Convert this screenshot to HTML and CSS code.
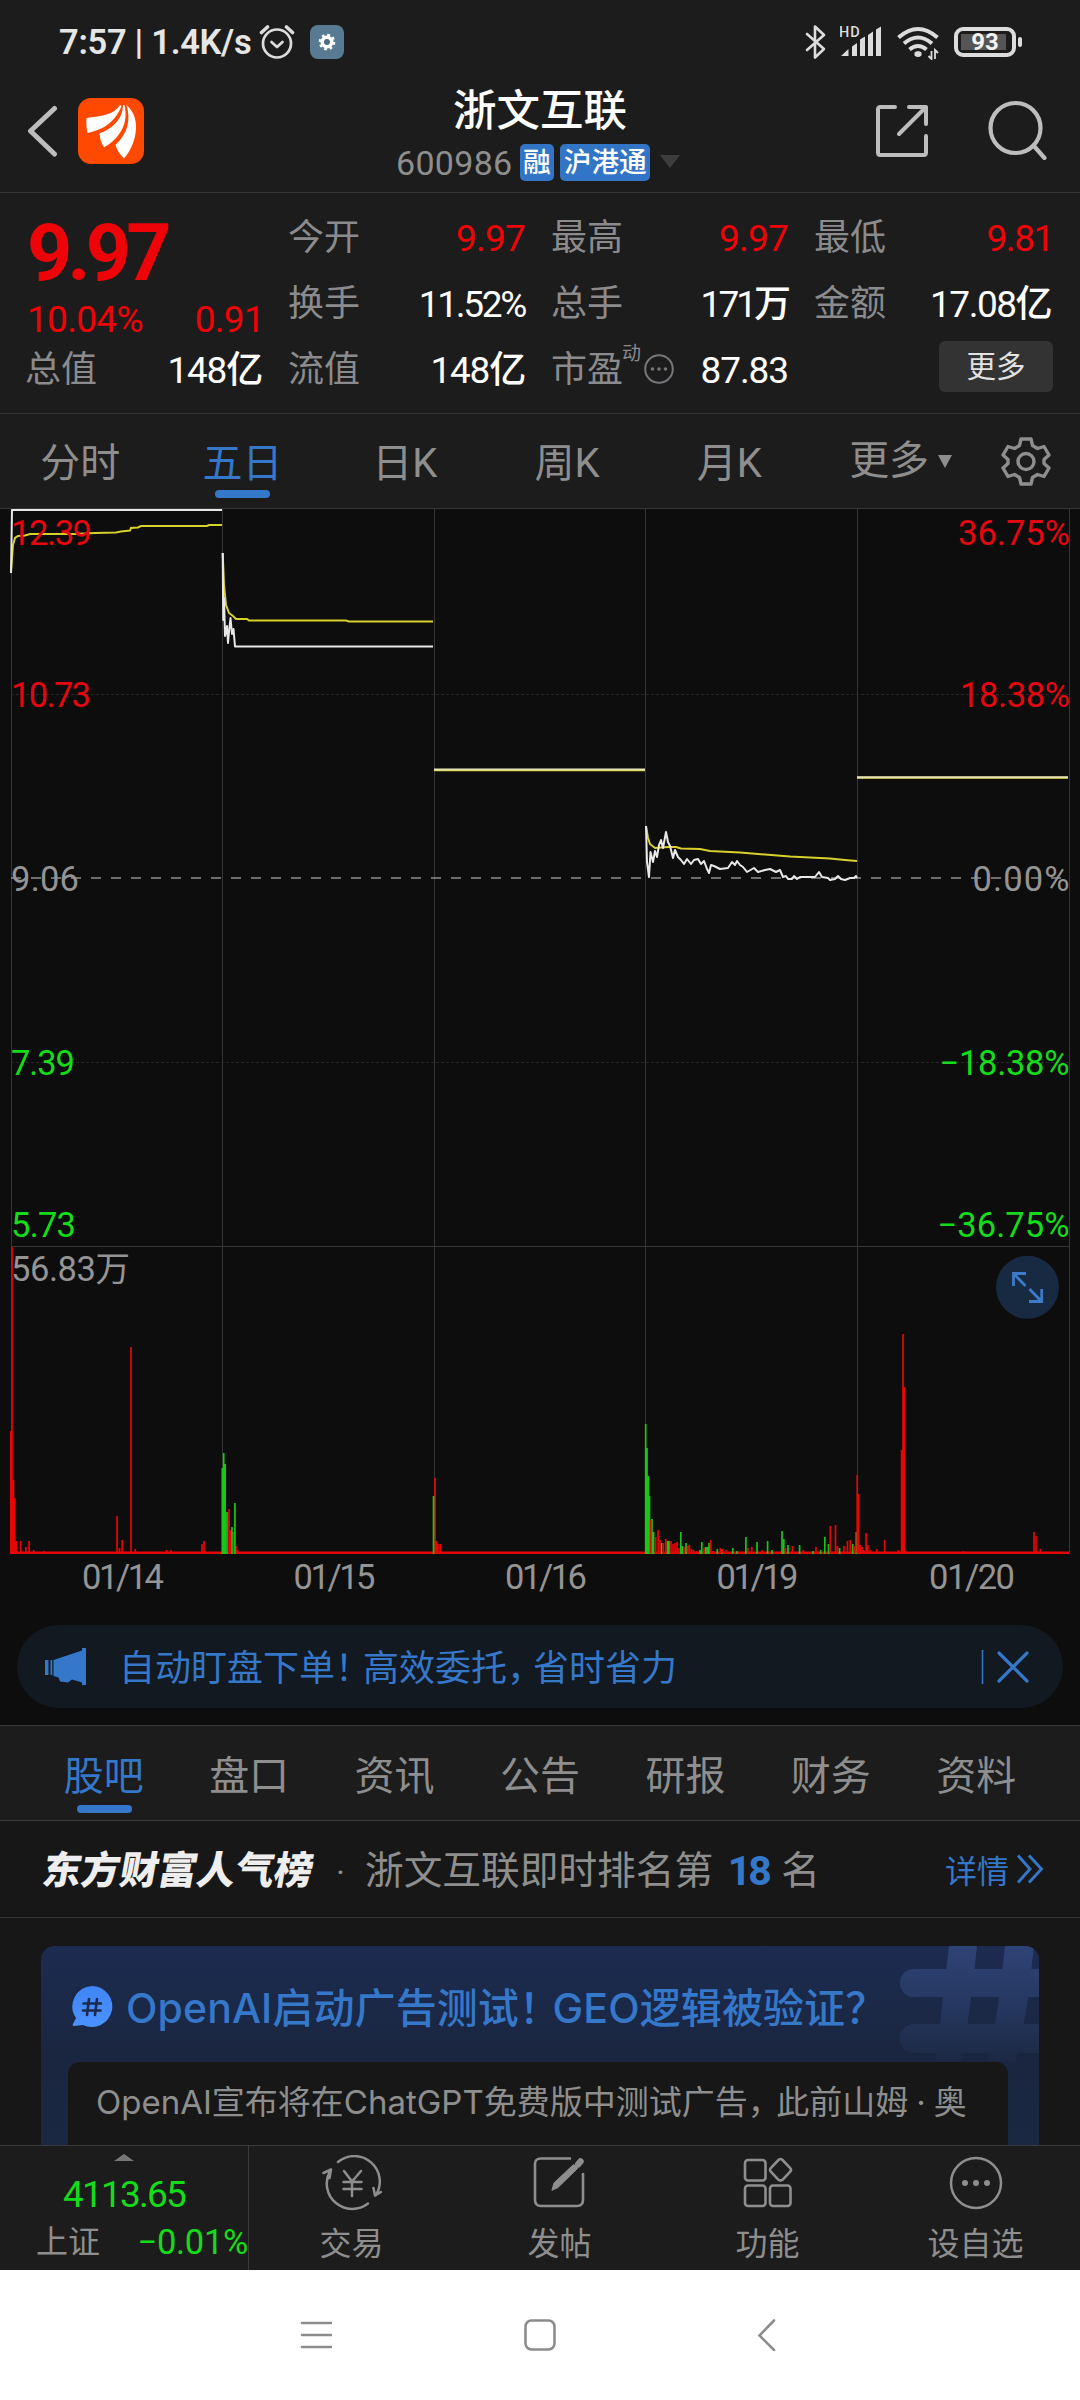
FILE: index.html
```html
<!DOCTYPE html>
<html lang="zh-CN">
<head>
<meta charset="utf-8">
<title>浙文互联 600986</title>
<link rel="stylesheet" href="styles.css">
</head>
<body>
<div class="screen">
  <div class="status">
    <span class="status-time">7:57 | 1.4K/s</span>
    <svg class="i-alarm" width="36" height="36" viewBox="0 0 36 36" fill="none" stroke="#dcdcdc" stroke-width="2.7" stroke-linecap="round" stroke-linejoin="round"><circle cx="18" cy="19.500" r="14"/><path d="M12.500 18l5.500 5 5.500-5"/><path d="M2.500 8.500l6-5.500M33.500 8.500l-6-5.500" stroke-width="3.600"/></svg>
    <svg class="i-app" width="34" height="34" viewBox="0 0 34 34"><rect width="34" height="34" rx="8" fill="#587b93"/><circle cx="17" cy="17" r="6.500" fill="#fff"/><circle cx="17" cy="17" r="7" fill="none" stroke="#fff" stroke-width="2.600" stroke-dasharray="2.750 2.750"/><circle cx="17" cy="17" r="3" fill="#4d6c81"/></svg>
    <div class="status-right">
      <svg width="22" height="36" viewBox="0 0 22 36" fill="none" stroke="#dcdcdc" stroke-width="2.600" stroke-linejoin="round" stroke-linecap="round"><path d="M2 10l17 15-9 8.500V2.500L19 11 2 26"/></svg>
      <svg class="i-signal" width="42" height="34" viewBox="0 0 42 34" fill="#dcdcdc"><text x="-1" y="12" font-size="14.500" font-weight="500" letter-spacing="1" font-family="Roboto, sans-serif">HD</text><path d="M1 31l7.500-7v7zM12 21.500l5-3.500v13h-5zM20 14.500l5-3v19.500h-5zM28 10l5-3.500v24.500h-5zM36 4.500l5-3v29.500h-5z"/></svg>
      <svg class="i-wifi" width="43" height="36" viewBox="0 0 43 36"><g fill="none" stroke="#dcdcdc" stroke-width="4"><path d="M1.500 13.500q19.500-17 39 0"/><path d="M7 19.500q14-12 28 0"/><path d="M12.500 25.500q8.500-7 17 0"/></g><path d="M17.500 28.500q3.500-3 7 0l0 3q-3.500 3-7 0z" fill="#dcdcdc"/><path d="M34.500 27v8l-3-3M38 35v-9l3 3" fill="none" stroke="#dcdcdc" stroke-width="1.800"/></svg>
      <span class="battery"><span class="battery-body">93</span><span class="battery-tip"></span></span>
    </div>
  </div>

  <header class="header">
    <svg class="i-back" width="32" height="52" viewBox="0 0 32 52" fill="none" stroke="#bdbdbd" stroke-width="5" stroke-linecap="round" stroke-linejoin="round"><path d="M27.500 3.500L3.500 26l24 23"/></svg>
    <svg class="i-logo" width="66" height="66" viewBox="0 0 66 66"><rect width="66" height="66" rx="13" fill="#ff4800"/><g fill="#fff"><path d="M42 7C36 17 23 18 8.600 20 8 25 8.500 30 9.500 35 22 32 36 27 43.500 8z"/><path d="M45 7C45 21 34 31 21.500 35.500 22 41 23.500 46 26 49.500 36 44 52 30 46.500 7z"/><path d="M48.500 7C53 22 50 35 37.500 47 39 52 42 56.500 46 60.500 56 50 66 22 48.500 7z"/></g></svg>
    <div class="title">
      <h1>浙文互联</h1>
      <div class="code"><span>600986</span><b>融</b><b class="hk">沪港通</b><svg width="20" height="14" viewBox="0 0 20 14"><path d="M0 0h20L10 13z" fill="#3d3d3d"/></svg></div>
    </div>
    <svg class="i-share" width="54" height="54" viewBox="0 0 54 54" fill="none" stroke="#bdbdbd" stroke-width="4" stroke-linecap="round" stroke-linejoin="round"><path d="M20 3H5.500Q3 3 3 5.500v43Q3 51 5.500 51h43q2.500 0 2.500-2.500V32"/><path d="M34 3h17v17M50 4L24 30"/></svg>
    <svg class="i-search" width="60" height="60" viewBox="0 0 60 60" fill="none" stroke="#bdbdbd" stroke-width="4.200" stroke-linecap="round"><circle cx="27.500" cy="28" r="25"/><path d="M45.500 45.500l11 12.500"/></svg>
  </header>

  <section class="quote">
    <div class="q-main">
      <div class="price">9.97</div>
      <div class="pair change"><span>10.04%</span><span>0.91</span></div>
      <div class="pair"><label>总值</label><em class="yi">148亿</em></div>
    </div>
    <div class="q-col">
      <div class="pair"><label>今开</label><i>9.97</i></div>
      <div class="pair"><label>换手</label><em class="pct">11.52%</em></div>
      <div class="pair"><label>流值</label><em class="yi">148亿</em></div>
    </div>
    <div class="q-col">
      <div class="pair"><label>最高</label><i>9.97</i></div>
      <div class="pair"><label>总手</label><em class="wan">171万</em></div>
      <div class="pair"><label class="pe">市盈<sup>动</sup><svg width="30" height="30" viewBox="0 0 30 30"><circle cx="15" cy="15" r="13.800" fill="none" stroke="#77777b" stroke-width="2"/><path d="M8.500 15h0M15 15h0M21.500 15h0" stroke="#77777b" stroke-width="3.600" stroke-linecap="round"/></svg></label><em class="per">87.83</em></div>
    </div>
    <div class="q-col">
      <div class="pair"><label>最低</label><i class="low">9.81</i></div>
      <div class="pair"><label>金额</label><em class="amt">17.08亿</em></div>
      <div class="pair end"><button>更多</button></div>
    </div>
  </section>

  <nav class="periods">
    <span>分时</span><span class="on">五日</span><span>日K</span><span>周K</span><span>月K</span>
    <span class="more">更多<svg width="14" height="13" viewBox="0 0 14 13"><path d="M0 0h14L7 13z" fill="#8e8e8e"/></svg></span>
    <span class="gear"><svg width="50" height="50" viewBox="0 0 50 50" fill="none" stroke="#8e8e8e" stroke-width="3.400" stroke-linejoin="round"><path d="M20 3h10l1.500 6.500 5 3 6.500-2 5 8.500-5 4.500v4l5 4.500-5 8.500-6.500-2-5 3L30 48H20l-1.500-6.500-5-3-6.500 2-5-8.500 5-4.500v-4L2 19l5-8.500 6.500 2 5-3z"/><circle cx="25" cy="25.500" r="8"/></svg></span>
  </nav>

  <section class="chart">
    <svg width="1080" height="1117" viewBox="0 508 1080 1117">
      <g class="grid">
        <path d="M11.500 508v1045M222.500 508v1045M434.500 508v1045M645.500 508v1045M857.500 508v1045M1069.500 508v1045M0 508.500h1080M11 1246.500h1058"/>
        <path class="faint" d="M11 694.500h1058M11 1062.500h1058"/>
      </g>
      <path class="zero" d="M11 878H1069"/>
      <g class="avg">
        <path d="M11 572L13 545 15 538 18 536 25 535.500 30 534H75L95 533 116 532.500 121 531.500 130 530.500 131 528 138 527.500 141 526H207L209 525H222"/>
        <path d="M222.700 553L224 585 226 605 229 613 233 616 236 619H247L249 620.500H346L349 621.500H433"/>
        <path d="M646 826L648 838 650 844 655 848 668 847H676L681 848.500 700 849 710 851 740 852.500 765 854.500 790 856.500 830 858.500 845 860 857 861"/>
        <path d="M434 770.300H645M857 777.800H1068"/>
      </g>
      <g class="last">
        <path d="M11 573L12 510H222"/>
        <path d="M222.700 553L223.200 620 224 598 225 636 227 626 228 643 229 632 230.500 618 232 634 233.500 629 235 646.500H433"/>
        <path d="M646 826L647 862 649 877 650.500 852 653 862 655 851 657 857 659 845 661 840 663 848 666 832 668 842 670 846 673 858 675 850 678 857 681 860 684 864 687 859 691 864 694 860 698 859 701 864 704 861 707 869 709 873 711 865 714 866 720 869 728 868 732 862 735 865 737 861 740 865 743 867 747 872 754 868 758 872 765 870 770 869 776 872 780 870 783 877 786 876 788 879 792 879 794 876 797 879 800 877 815 877 819 872 822 877 828 878 830 880 835 879 838 876 841 879 845 880 850 878 854 878 856 876 857 878"/>
        <path class="soft" d="M434 769.500H645M857 777.200H1068"/>
      </g>
      <g class="vol-up">
        <path d="M10 1552.800H1069" stroke-width="2.600"/>
        <path d="M12 1553V1247M10.800 1553V1431M13.500 1553V1480M14.800 1553V1498M16.200 1553V1541M20.700 1553V1541M25.800 1553V1547M29 1553V1541M33.700 1553V1550M44 1553V1551M117 1553V1516M119.500 1553V1548M122.200 1553V1540M131 1553V1347M135.300 1553V1549M166.700 1553V1550M171 1553V1550M202 1553V1544M204 1553V1541"/>
        <path d="M229 1553V1509M230.400 1553V1530M233.500 1553V1532M236 1553V1546M237.500 1553V1550M435 1553V1478M436.600 1553V1541M438 1553V1544M440.400 1553V1544"/>
      </g>
      <g class="vol-down">
        <path d="M222.300 1554V1468M223.700 1554V1453M225.200 1554V1464M227 1554V1512M232 1554V1527M234.900 1554V1503M433.500 1554V1496"/>
        <path d="M645.700 1554V1424M647 1554V1448M648.500 1554V1476M649.500 1554V1496M652 1554V1519M653.600 1554V1532M661.500 1554V1543M667.400 1554V1541M669 1554V1541M680.800 1554V1532M682.600 1554V1546M686 1554V1543M700 1554V1550M701.800 1554V1542M705.600 1554V1547M707.400 1554V1547M709 1554V1543M717.300 1554V1549M722 1554V1550M732.800 1554V1548M737 1554V1551M745.900 1554V1537M757 1554V1542M767.600 1554V1541M772 1554V1550M782 1554V1531M783.800 1554V1539M788 1554V1545M799.600 1554V1545M813 1554V1551M820.600 1554V1550M824.800 1554V1537M828.500 1554V1544M839.600 1554V1548M852.700 1554V1544M856.300 1554V1532"/>
      </g>
      <g class="vol-up">
        <path d="M650.600 1553V1520M655.700 1553V1537M658.100 1553V1530M660 1553V1540M663.300 1553V1543M665.700 1553V1539M671 1553V1541M673 1553V1544M675 1553V1543M677 1553V1542M679 1553V1548M684 1553V1547M687.700 1553V1546M689.500 1553V1545M691.500 1553V1549M693.600 1553V1550M696 1553V1551M704 1553V1548M710.800 1553V1540M713 1553V1551M720.400 1553V1548M722.500 1553V1549M726 1553V1550M748 1553V1548M751.800 1553V1547M762 1553V1550M785.500 1553V1548M792.400 1553V1546M803.400 1553V1550M816 1553V1547M830.300 1553V1526M835.500 1553V1525M837.500 1553V1546M844 1553V1546M847.500 1553V1541M850.300 1553V1540M854.700 1553V1546"/>
        <path d="M857.200 1553V1475M858.500 1553V1494M860.200 1553V1545M862 1553V1547M863.700 1553V1550M866.100 1553V1533M867.800 1553V1545M870 1553V1550M876.800 1553V1549M884.700 1553V1540M898.500 1553V1550M901.600 1553V1450M903 1553V1334M904.300 1553V1387M963.500 1553V1551M1034 1553V1532M1036 1553V1536M1040.300 1553V1549"/>
      </g>
      <g class="axis">
        <g class="rise"><text x="11" y="544.500" textLength="81">12.39</text><text x="11" y="707" textLength="80">10.73</text><text x="958" y="544.500" textLength="112">36.75%</text><text x="960" y="707" textLength="110">18.38%</text></g>
        <g class="flat"><text x="11" y="890.500" textLength="68">9.06</text><text x="972.500" y="890.500" textLength="97">0.00%</text><text x="11" y="1281" textLength="119">56.83万</text></g>
        <g class="fall"><text x="11" y="1075" textLength="64">7.39</text><text x="11" y="1236.500" textLength="65">5.73</text><text x="939.500" y="1075" textLength="130">−18.38%</text><text x="937.500" y="1236.500" textLength="132">−36.75%</text></g>
        <g class="flat"><text x="82" y="1588.500" textLength="82">01/14</text><text x="293.500" y="1588.500" textLength="82">01/15</text><text x="505" y="1588.500" textLength="82">01/16</text><text x="716.500" y="1588.500" textLength="82">01/19</text><text x="929" y="1588.500" textLength="86">01/20</text></g>
      </g>
      <circle cx="1027.500" cy="1287.300" r="31.500" fill="#182a42"/>
      <path d="M1026 1273.500h-12.500v12.500M1014 1274l11.500 12M1029 1301.500h12.700v-12.500M1041 1301l-11.500-12" fill="none" stroke="#3d7bc8" stroke-width="2.800"/>
    </svg>
    <div class="notice">
      <svg width="41" height="38" viewBox="0 0 41 38" fill="#3577c9"><path d="M0 12h3.500v15H0zM5.500 12h1.800v15H5.500zM8.500 12L37 2.500V0h4v37h-4v-2.500l-10-3-4 3-8-1-1.500-4-5-1.500z"/></svg>
      <span>自动盯盘下单<s>！</s>高效委托<s>，</s>省时省力</span>
      <svg class="close" width="48" height="36" viewBox="0 0 48 36" fill="none" stroke="#3577c9"><path d="M1.500 1v34" stroke-width="1.600"/><path d="M18 4l28 28M46 4L18 32" stroke-width="3.200" stroke-linecap="round"/></svg>
    </div>
  </section>

  <nav class="sections"><span class="on">股吧</span><span>盘口</span><span>资讯</span><span>公告</span><span>研报</span><span>财务</span><span>资料</span></nav>

  <div class="rank">
    <strong>东方财富人气榜</strong><span class="dot">·</span><span class="rank-text">浙文互联即时排名第</span><b>18</b><span class="rank-text">名</span>
    <a>详情<svg width="28" height="30" viewBox="0 0 28 30" fill="none" stroke="#3577c9" stroke-width="2.900"><path d="M2 1.500L14 15 2 28.500M13 1.500L25.500 15 13 28.500"/></svg></a>
  </div>

  <section class="feed">
    <article class="card">
      <svg class="hash" width="139" height="116" viewBox="859 0 139 116">
        <defs><linearGradient id="h" x1="0" y1="0" x2="0" y2="116" gradientUnits="userSpaceOnUse"><stop offset="0" stop-color="#2e4476"/><stop offset=".5" stop-color="#263861"/><stop offset="1" stop-color="#1c2843"/></linearGradient></defs>
        <g fill="url(#h)">
          <path d="M908 0L901 60 895 116H921L929 60 936 0z"/>
          <path d="M964 0L957 60 947 116H975L986 60 993 0z"/>
          <path d="M873 23H998V51H873A14 14 0 0 1 873 23z"/>
          <path d="M873 78H998V107H873A14.500 14.500 0 0 1 873 78z"/>
        </g>
      </svg>
      <h2><svg width="42" height="42" viewBox="0 0 42 42"><defs><linearGradient id="b" x1="0" y1="0" x2="0" y2="1"><stop offset="0" stop-color="#3f86f5"/><stop offset="1" stop-color="#4c92ff"/></linearGradient></defs><path d="M21 0a20.500 20.500 0 1 1-9 39l-9 1q-2 0-1-2l3-6A20.500 20.500 0 0 1 21 0z" fill="url(#b)"/><path d="M18 13l-2 16M26 13l-2 16M12.500 17.500h17.500M12 24.500h17.500" stroke="#1b2a4e" stroke-width="2.600" stroke-linecap="round"/></svg><span>OpenAI启动广告测试<s>！</s>GEO逻辑被验证？</span></h2>
      <p>OpenAI宣布将在ChatGPT免费版中测试广告<s>，</s>此前山姆<u>·</u>奥</p>
    </article>
  </section>

  <footer class="dock">
    <div class="index">
      <svg width="20" height="7" viewBox="0 0 20 7"><path d="M0 7L10 0l10 7z" fill="#777"/></svg>
      <div class="idx-val">4113.65</div>
      <div class="idx-row"><span>上证</span><b>−0.01%</b></div>
    </div>
    <div class="tool"><svg width="60" height="56" viewBox="0 0 60 56" fill="none" stroke="#8e8e8e" stroke-width="2.500" stroke-linecap="round" stroke-linejoin="round"><path d="M16 7A25.500 25.500 0 0 1 54 40M53 40.500L59 37M51.500 33L53 40.500"/><path d="M46 48.500A25.500 25.500 0 0 1 8 16M1.500 18L9 14.500M9 14.500L7.500 23"/><path d="M22 16l8 10.500L39 16M30 26.500V41M21.500 27h18M21.500 34h18"/></svg><span>交易</span></div>
    <div class="tool"><svg width="54" height="56" viewBox="0 0 54 56" fill="none" stroke="#8e8e8e" stroke-width="2.600" stroke-linecap="round"><path d="M37 3.500H8Q2 3.500 2 9v36q0 6 6 6h36q6 0 6-6V19"/><path d="M19 35l2-7L40.500 9.500l4 4L25 32.500z" fill="#8e8e8e" stroke-width="1"/><path d="M45 9.500l2.500-3" stroke-width="6.500"/></svg><span>发帖</span></div>
    <div class="tool"><svg width="52" height="56" viewBox="0 0 52 56" fill="none" stroke="#8e8e8e" stroke-width="2.600" stroke-linejoin="round"><rect x="3" y="5" width="20.500" height="20.500" rx="3"/><rect x="3" y="30.500" width="20.500" height="20.500" rx="3"/><rect x="28" y="30.500" width="20.500" height="20.500" rx="3"/><path d="M36.500 5L29 12.800q-2 2 0 4l7.500 8q2 1.500 4 0l7.500-8q2-2 0-4L40.500 5q-2-2-4 0z"/></svg><span>功能</span></div>
    <div class="tool"><svg width="54" height="56" viewBox="0 0 54 56"><circle cx="27" cy="28" r="25" fill="none" stroke="#8e8e8e" stroke-width="2.500"/><path d="M16 28h0M27 28h0M38 28h0" stroke="#8e8e8e" stroke-width="6" stroke-linecap="round"/></svg><span>设自选</span></div>
  </footer>

  <div class="sysnav">
    <svg width="32" height="32" viewBox="0 0 32 32"><path d="M2 4h29M2 16h29M2 28h29"/></svg>
    <svg width="32" height="32" viewBox="0 0 32 32"><rect x="1.500" y="1.500" width="29" height="29" rx="6"/></svg>
    <svg width="32" height="32" viewBox="0 0 32 32"><path d="M26 1.500L11.500 16.500 26 31"/></svg>
  </div>
</div>
</body>
</html>
```
FILE: styles.css
```css
* { box-sizing: border-box; margin: 0; padding: 0; }
body { background: #1c1c1c; }
.screen {
  width: 1080px; height: 2400px; display: flex; flex-direction: column; overflow: hidden;
  background: #1c1c1c; color: #8e8e8e;
  font-family: Roboto, "Noto Sans CJK SC", sans-serif; font-size: 36px; line-height: 1;
  white-space: nowrap; font-variant-ligatures: none;
}
svg { display: block; flex: none; }
em, i { font-style: normal; }
s, u { text-decoration: none; }
/* half-width punctuation, with a little air after it */
s { font-feature-settings: "halt"; margin-right: 8px; }

/* system status bar */
.status { height: 84px; display: flex; align-items: center; padding: 0 58px 0 59px; color: #e6e6e6; }
.status-time { font-size: 34.500px; font-weight: 600; width: 200px; letter-spacing: -.3px; }
.i-alarm { margin-right: 15px; }
.status-right { margin-left: auto; display: flex; align-items: center; gap: 13px; }
.i-wifi { margin-left: 2px; }
.battery { display: flex; align-items: center; margin-left: 1px; }
.battery-body {
  width: 62px; height: 30px; border: 4px solid #dcdcdc; border-radius: 9px; color: #f2f2f2;
  background: linear-gradient(#555, #555) 3px 3px / 45px 16px no-repeat;
  font-size: 24px; font-weight: 700; line-height: 23px; text-align: center;
}
.battery-tip { width: 4px; height: 10px; margin-left: 2px; border-radius: 2px; background: #dcdcdc; }

/* title bar */
.header { height: 109px; display: flex; border-bottom: 1px solid #363636; }
.i-back { margin: 21px 0 0 27px; }
.i-logo { margin: 14px 0 0 19px; }
.title { width: 480px; margin-left: 157px; }
.title h1 { margin-left: 152px; padding-top: 2px; font-size: 43.500px; line-height: 52px; font-weight: 500; color: #fff; }
.code { display: flex; align-items: center; height: 38px; margin: 5px 0 0 95px; font-size: 34px; }
.code span { width: 124px; padding-top: 1px; letter-spacing: .3px; }
.code b { height: 37px; padding: 0 3px; margin-right: 6px; border-radius: 5px; background: #3274c6; color: #fff; font-size: 27.700px; font-weight: 500; line-height: 37px; }
.code .hk { width: 90px; padding-left: 4px; margin-right: 10px; }
.i-share { margin: 20px 0 0 94px; }
.i-search { margin: 16px 0 0 59px; }

/* quote summary */
.quote { height: 221px; padding: 12px 0 0 27px; display: grid; grid-template-columns: repeat(4, 235px); column-gap: 28px; border-bottom: 1px solid #363636; }
.pair { height: 66px; display: flex; justify-content: space-between; align-items: center; font-size: 37px; }
.pair label { margin-left: -2px; font-size: 36px; color: #8b8b8e; }
.pair em { color: #fff; font-weight: 450; }
.pair i, .change, .price { color: #ee0308; }
.pair i { letter-spacing: -.8px; }
.pair .low { margin-right: -2px; letter-spacing: -1.400px; }
.price { height: 96px; font-size: 79px; line-height: 96px; font-weight: 700; letter-spacing: -4.800px; }
.change { height: 36px; margin-right: -2px; letter-spacing: -.7px; }
.pct { letter-spacing: -2.300px; }
.yi { letter-spacing: -1.200px; }
.wan { letter-spacing: -3px; }
.amt { letter-spacing: -1.500px; }
.per { letter-spacing: -1.100px; }
.end { justify-content: flex-end; align-items: flex-start; padding-top: 4px; margin-right: -2px; }
.end button { width: 114px; height: 51px; border: 0; border-radius: 6px; background: #333; color: #e2e2e2; font: 29.500px/52px Roboto, "Noto Sans CJK SC", sans-serif; }
.pair .pe { display: flex; align-items: center; }
.pe sup { margin: -34px 3px 0 -1px; font-size: 19px; line-height: 19px; }
.pe svg { margin-top: -2px; }

/* tab strips */
.periods { height: 94px; display: grid; grid-template-columns: repeat(6, 162.300px) 1fr; }
.periods span, .sections span { position: relative; font-size: 40px; line-height: 100px; text-align: center; }
.on { color: #3577c9; }
.on::after { content: ""; position: absolute; left: 50%; bottom: 10px; width: 55px; height: 8px; margin-left: -27px; border-radius: 4px; background: #3577c9; }
.periods span { height: 94px; left: -1px; }
.periods .more { display: flex; align-items: center; justify-content: center; gap: 9px; padding-left: 18px; }
.gear { display: flex; align-items: center; justify-content: center; }

/* five-day chart */
.chart { height: 1217px; background: #0d0d0d; }
.grid path { stroke: #363636; fill: none; }
.grid .faint { stroke: #262626; stroke-dasharray: 3 2; }
.zero { stroke: #8e8e8e; stroke-width: 1.700; stroke-dasharray: 10 10; }
.avg { fill: none; stroke: #d8d02c; stroke-width: 2; }
.last { fill: none; stroke: #e8e8e8; stroke-width: 2; stroke-linejoin: round; }
.last .soft { stroke: #e6e4b4; }
.vol-up { stroke: #e60608; stroke-width: 1.700; }
.vol-down { stroke: #1ac41a; stroke-width: 1.700; }
.axis { font-size: 34.500px; }
.rise { fill: #e60610; }
.fall { fill: #14dc1a; }
.flat { fill: #949494; }
.notice { width: 1046px; height: 83px; margin-left: 17px; border-radius: 42px; background: #121921; color: #3577c9; display: flex; align-items: center; padding: 0 34px 0 28px; }
.notice span { margin-left: 33px; padding-top: 4px; }
.notice s:first-of-type { margin-right: 10px; }
.close { margin-left: auto; }

/* content tabs */
.sections { height: 96px; padding: 0 31px; display: grid; grid-template-columns: repeat(7, 1fr); border-top: 1px solid #3a3a3a; border-bottom: 1px solid #3a3a3a; }
.sections span { height: 94px; line-height: 102px; }
.sections .on::after { bottom: 7px; }

.rank { height: 97px; display: flex; align-items: center; padding: 5px 36px 0 43px; background: #171717; border-bottom: 1px solid #343434; }
.rank strong { width: 273px; color: #eee; font-size: 38.600px; font-weight: 900; transform: skewX(-10deg); }
.dot { width: 49px; text-align: center; font-size: 34px; }
.rank-text { font-size: 38.700px; }
.rank b { width: 68px; padding-left: 2px; text-align: center; font-size: 41px; color: #3577c9; letter-spacing: -3px; }
.rank a { margin-left: auto; display: flex; align-items: center; gap: 7px; color: #3577c9; font-size: 32px; }
.rank a svg { margin-top: -5px; }

/* topic card, cut off by the dock */
.feed { height: 227px; padding: 28px 41px 0; background: #171717; overflow: hidden; font-family: Inter, "Noto Sans CJK SC", sans-serif; }
.card { position: relative; height: 320px; padding: 0 31px 0 27px; border-radius: 14px; overflow: hidden; background: linear-gradient(#1c2b50, #1a2640 110px, #1b2a44); }
.hash { position: absolute; top: 0; right: 0; }
.card h2 { position: relative; height: 116px; padding: 6px 0 0 3px; display: flex; align-items: center; gap: 13px; color: #3577c9; font-size: 41px; font-weight: 500; letter-spacing: .1px; }
.card h2 span { padding-top: 2px; }
.card h2 s { margin-right: 13px; }
.card p { height: 220px; padding: 21px 0 0 28px; border-radius: 12px; background: #171717; font-size: 33px; line-height: 38px; position: relative; }
.card p s { margin-right: 12px; }
.card p u { margin: 0 8px; }

/* bottom dock */
.dock { height: 125px; display: grid; grid-template-columns: 249px repeat(4, 208px); border-top: 1px solid #3a3a3a; }
.index { border-right: 1px solid #3a3a3a; }
.index svg { margin: 8px 0 0 114px; }
.idx-val { margin-top: 14px; text-align: center; font-size: 37px; line-height: 40px; color: #14dc1a; letter-spacing: -1.800px; }
.idx-row { display: flex; justify-content: space-between; padding-left: 36px; font-size: 32px; line-height: 54px; }
.idx-row b { color: #14dc1a; font-weight: 400; font-size: 34.500px; letter-spacing: -.3px; }
.tool { display: flex; flex-direction: column; align-items: center; padding: 9px 3px 0 0; font-size: 32px; }
.tool span { line-height: 66px; }

.sysnav { height: 130px; background: #fff; display: flex; justify-content: center; align-items: center; gap: 192px; }
.sysnav svg { fill: none; stroke: #8c8c8c; stroke-width: 2.600; stroke-linecap: round; }
```
